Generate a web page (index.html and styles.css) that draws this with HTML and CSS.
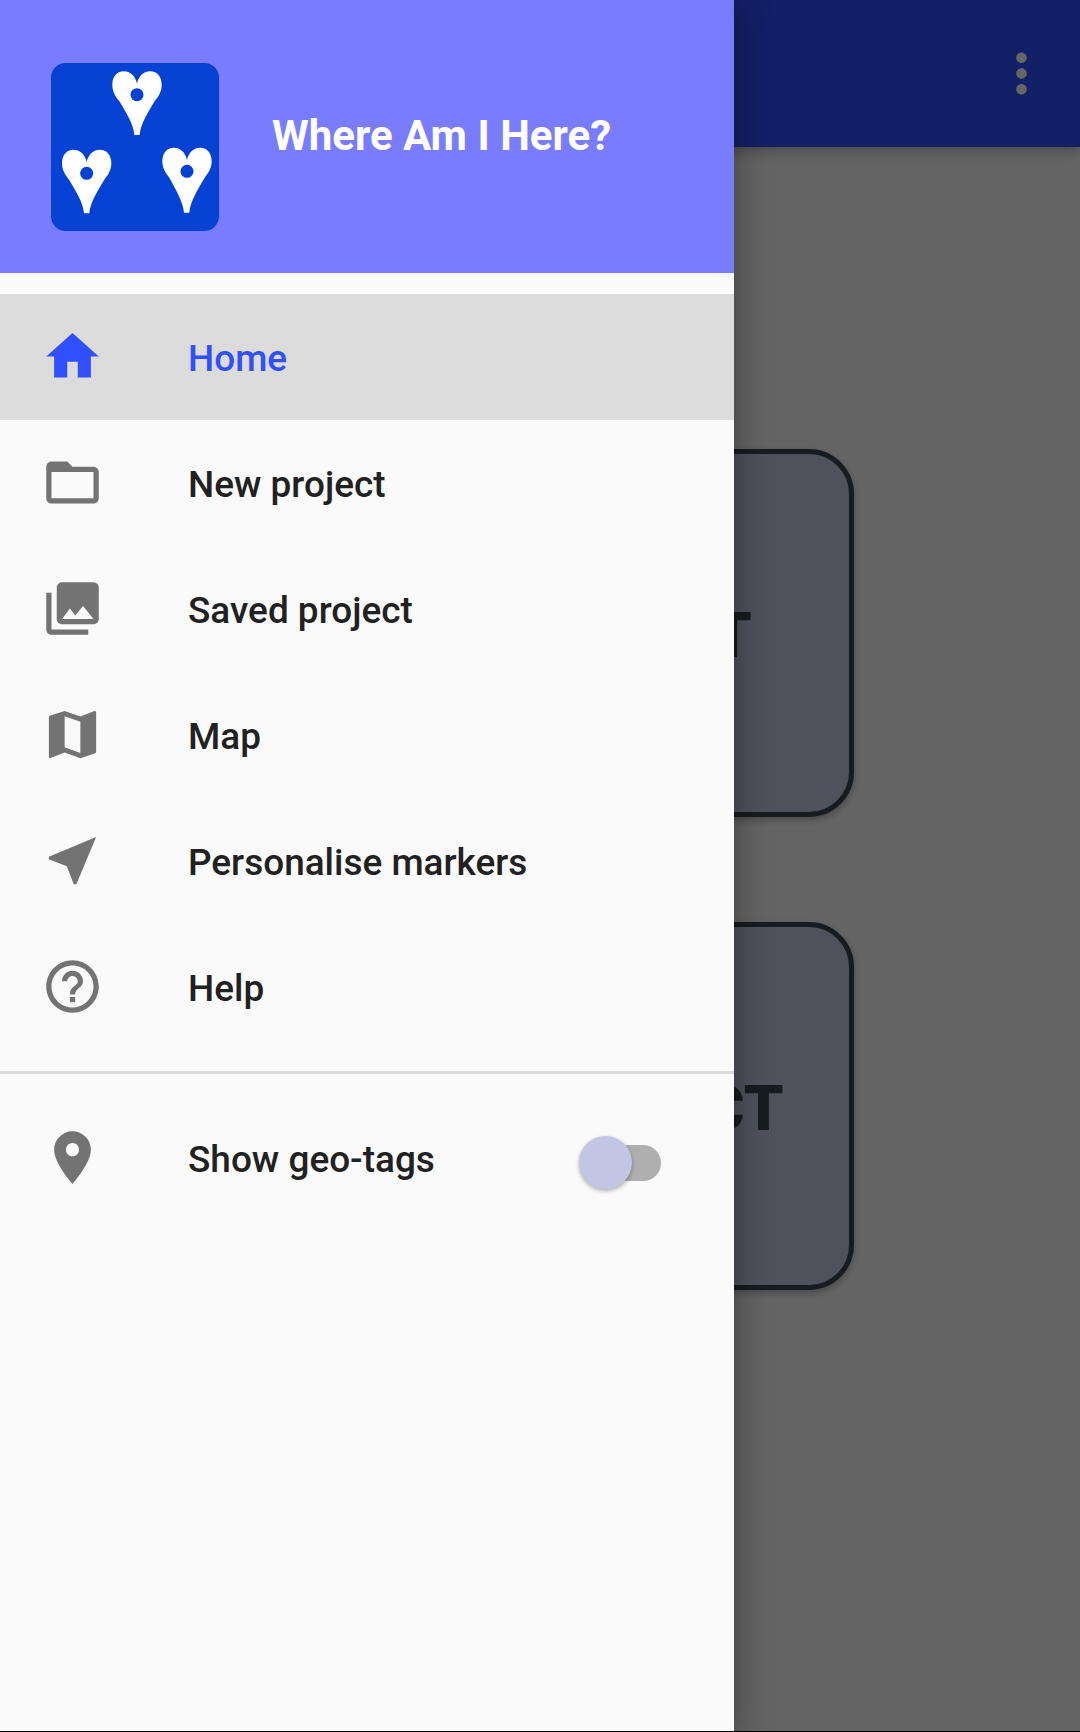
FILE: index.html
```html
<!DOCTYPE html>
<html lang="en">
<head>
<meta charset="utf-8">
<title>Where Am I Here?</title>
<link rel="stylesheet" href="styles.css">
</head>
<body>
<div class="screen">
  <div class="page">
    <header class="app-bar">
      <svg class="overflow" viewBox="0 0 24 24"><path d="M12 8c1.1 0 2-.9 2-2s-.9-2-2-2-2 .9-2 2 .9 2 2 2zm0 2c-1.1 0-2 .9-2 2s.9 2 2 2 2-.9 2-2-.9-2-2-2zm0 6c-1.1 0-2 .9-2 2s.9 2 2 2 2-.9 2-2-.9-2-2-2z"/></svg>
    </header>
    <main class="actions">
      <button class="action">NEW PROJECT</button>
      <button class="action">SAVED PROJECT</button>
    </main>
  </div>
  <div class="scrim"></div>
  <aside class="drawer">
    <header class="drawer-header">
      <svg class="logo" viewBox="63 69 504 504">
        <rect class="logo-bg" x="63" y="69" width="504" height="504" rx="44"/>
        <g class="logo-pin">
          <path d="M321 131C316 108 301 94 281 94C261 94 247 110 247 134C247 155 255 167 268 184C286 214 311 252 313 285H329C331 252 356 214 374 184C387 167 395 155 395 134C395 110 381 94 361 94C341 94 326 108 321 131Z"/>
          <path d="M170 366C165 343 150 329 130 329C110 329 96 345 96 369C96 390 104 402 117 419C135 449 160 487 162 520H178C180 487 205 449 223 419C236 402 244 390 244 369C244 345 230 329 210 329C190 329 175 343 170 366Z"/>
          <path d="M471 360C466 337 451 323 431 323C411 323 397 339 397 363C397 384 405 396 418 413C435 445 460 485 462 518H478C480 485 506 443 524 413C537 396 545 384 545 363C545 339 531 323 511 323C491 323 476 337 471 360Z"/>
        </g>
        <g class="logo-bg">
          <circle cx="321" cy="164" r="19.5"/>
          <circle cx="170" cy="400" r="19.5"/>
          <circle cx="471" cy="394" r="19.5"/>
        </g>
      </svg>
      <h1 class="title">Where Am I Here?</h1>
    </header>
    <nav class="menu">
      <a class="item item-active">
        <svg class="icon" viewBox="0 0 24 24"><path d="M10 20v-6h4v6h5v-8h3L12 3 2 12h3v8z"/></svg>
        <span class="label">Home</span>
      </a>
      <a class="item">
        <svg class="icon" viewBox="0 0 24 24"><path d="M20 6h-8l-2-2H4c-1.1 0-1.99.9-1.99 2L2 18c0 1.1.9 2 2 2h16c1.1 0 2-.9 2-2V8c0-1.1-.9-2-2-2zm0 12H4V8h16v10z"/></svg>
        <span class="label">New project</span>
      </a>
      <a class="item">
        <svg class="icon" viewBox="0 0 24 24"><path d="M22 16V4c0-1.1-.9-2-2-2H8c-1.1 0-2 .9-2 2v12c0 1.1.9 2 2 2h12c1.1 0 2-.9 2-2zM8 16l3-4 2.03 2.71L16 11l4 5H8zM2 6v14c0 1.1.9 2 2 2h14v-2H4V6H2z"/></svg>
        <span class="label">Saved project</span>
      </a>
      <a class="item">
        <svg class="icon" viewBox="0 0 24 24"><path d="M20.5 3l-.16.03L15 5.1 9 3 3.36 4.9c-.21.07-.36.25-.36.48V20.5c0 .28.22.5.5.5l.16-.03L9 18.9l6 2.1 5.64-1.9c.21-.07.36-.25.36-.48V3.5c0-.28-.22-.5-.5-.5zM15 19l-6-2.11V5l6 2.11V19z"/></svg>
        <span class="label">Map</span>
      </a>
      <a class="item">
        <svg class="icon" viewBox="0 0 24 24"><path d="M21 3L3 10.53v.98l6.84 2.65L12.48 21h.98L21 3z"/></svg>
        <span class="label">Personalise markers</span>
      </a>
      <a class="item">
        <svg class="icon" viewBox="0 0 24 24"><path d="M11 18h2v-2h-2v2zm1-16C6.48 2 2 6.48 2 12s4.48 10 10 10 10-4.48 10-10S17.52 2 12 2zm0 18c-4.41 0-8-3.59-8-8s3.59-8 8-8 8 3.59 8 8-3.59 8-8 8zm0-14c-2.21 0-4 1.79-4 4h2c0-1.1.9-2 2-2s2 .9 2 2c0 2-3 1.75-3 5h2c0-2.25 3-2.5 3-5 0-2.21-1.79-4-4-4z"/></svg>
        <span class="label">Help</span>
      </a>
    </nav>
    <div class="menu settings">
      <div class="item">
        <svg class="icon" viewBox="0 0 24 24"><path d="M12 2C8.13 2 5 5.13 5 9c0 5.25 7 13 7 13s7-7.75 7-13c0-3.87-3.13-7-7-7zm0 9.5c-1.38 0-2.5-1.12-2.5-2.5s1.12-2.5 2.5-2.5 2.5 1.12 2.5 2.5-1.12 2.5-2.5 2.5z"/></svg>
        <span class="label">Show geo-tags</span>
        <span class="switch"><span class="thumb"></span></span>
      </div>
    </div>
  </aside>
</div>
</body>
</html>
```
FILE: styles.css
```css
* {
  box-sizing: border-box;
}

body {
  margin: 0;
  font-family: Roboto, "Liberation Sans", sans-serif;
}

.screen {
  position: relative;
  width: 1080px;
  height: 1732px;
  overflow: hidden;
  border-bottom: 1px solid #000;
  background: #fafafa;
}

.page {
  display: flex;
  flex-direction: column;
  height: 100%;
}

.app-bar {
  display: flex;
  align-items: center;
  justify-content: flex-end;
  height: 147px;
  padding-right: 27px;
  background: #304ffe;
  box-shadow: 0 4px 12px rgba(0, 0, 0, 0.28);
}

.overflow {
  width: 63px;
  height: 63px;
  fill: #fff;
}

.actions {
  display: flex;
  flex-direction: column;
  align-items: center;
  gap: 105px;
  padding-top: 302px;
}

.action {
  width: 628px;
  height: 368px;
  padding: 5px 3px 0 0;
  border: 5px solid #37474f;
  border-radius: 45px;
  background: #c5cae9;
  box-shadow: 0 3px 7px rgba(0, 0, 0, 0.28);
  color: #37474f;
  font: 900 63px/1 Roboto, "Liberation Sans", sans-serif;
  white-space: nowrap;
}

.scrim {
  position: absolute;
  inset: 0;
  background: rgba(0, 0, 0, 0.6);
}

.drawer {
  position: absolute;
  inset: 0 auto 0 0;
  width: 734px;
  background: #fafafa;
  box-shadow: 0 8px 34px rgba(0, 0, 0, 0.38);
}

.drawer-header {
  display: flex;
  gap: 53px;
  height: 273px;
  padding: 63px 0 0 51px;
  background: #7a7cff;
}

.logo {
  width: 168px;
  height: 168px;
}

.logo-bg {
  fill: #0542d3;
}

.logo-pin {
  fill: #fff;
}

.title {
  margin: 48px 0 0;
  color: #fff;
  font-size: 42px;
  font-weight: 700;
  line-height: 49px;
}

.menu {
  padding: 21px 0;
}

.settings {
  border-top: 3px solid #dbdbdb;
}

.item {
  display: flex;
  align-items: center;
  height: 126px;
  padding: 0 73px 0 41px;
  color: #212121;
}

.item-active {
  background: #dcdcdc;
  color: #304ffe;
}

.icon {
  width: 63px;
  height: 63px;
  margin-bottom: 1px;
  fill: #737373;
}

.item-active .icon {
  fill: #304ffe;
}

.label {
  flex: 1;
  margin-left: 84px;
  padding-top: 2px;
  font-size: 36.95px;
  font-weight: 500;
  line-height: 43px;
}

.switch {
  display: flex;
  align-items: center;
  width: 74px;
  height: 36px;
  margin-top: 10px;
  border-radius: 18px;
  background: #afafaf;
}

.thumb {
  flex: none;
  width: 53px;
  height: 53px;
  margin: 0 0 1px -8px;
  border-radius: 50%;
  background: #c2c6e4;
  box-shadow: 0 2px 4px rgba(0, 0, 0, 0.3);
}
```
